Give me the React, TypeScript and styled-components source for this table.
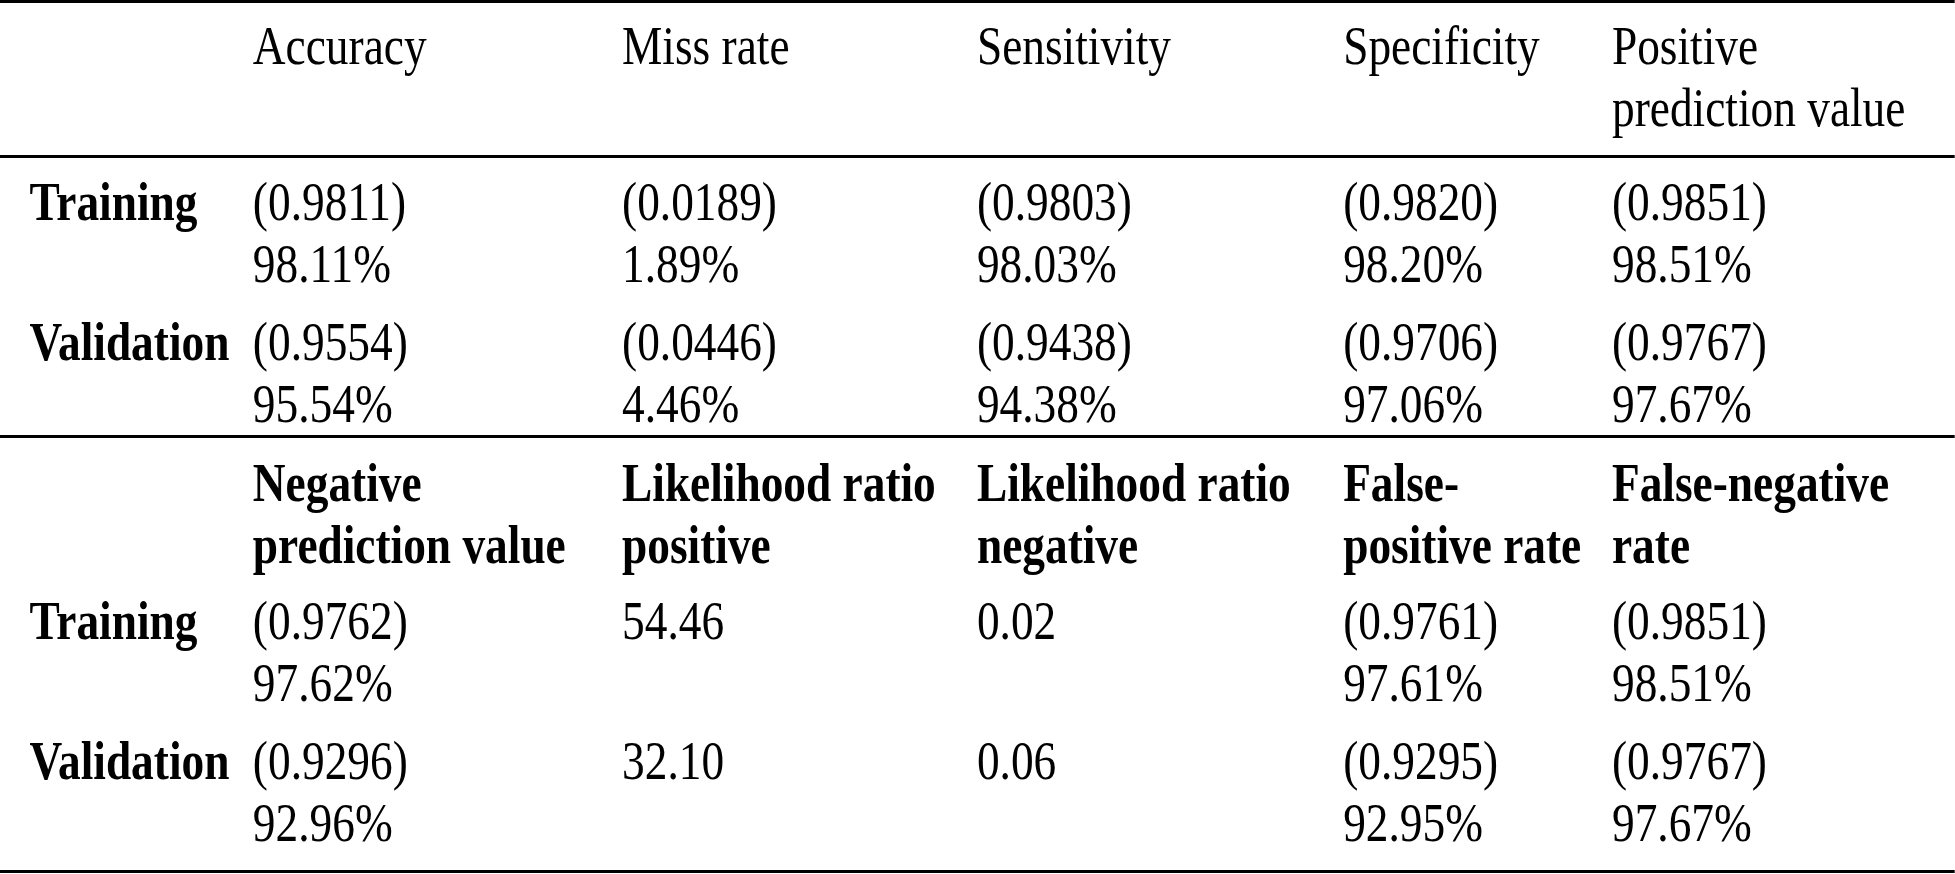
import React from 'react';
import styled, { createGlobalStyle } from 'styled-components';

const SCALE = 0.84;

const Global = createGlobalStyle`
  html, body {
    margin: 0;
    padding: 0;
    background: #ffffff;
    overflow: hidden;
  }
`;

const Page = styled.div`
  width: 1955px;
  height: 874px;
  overflow: hidden;
  background: #ffffff;
`;

const Table = styled.div`
  width: ${1955 / SCALE}px;
  transform: scaleX(${SCALE});
  transform-origin: left top;
  display: flex;
  flex-direction: column;
  font-family: "Liberation Serif", "Times New Roman", Times, serif;
  font-size: 54px;
  line-height: 62px;
  color: #000000;
`;

const Row = styled.div<{ $pt: number; $pb: number; $top?: boolean; $bottom?: boolean; $bold?: boolean }>`
  display: grid;
  grid-template-columns: 301px 439.5px 422.5px 436px 320px 1fr;
  padding: ${(p) => p.$pt}px 0 ${(p) => p.$pb}px;
  border-top: ${(p) => (p.$top ? '3px solid #000' : 'none')};
  border-bottom: ${(p) => (p.$bottom ? '3px solid #000' : 'none')};
  font-weight: ${(p) => (p.$bold ? 700 : 400)};
`;

const Label = styled.div`
  padding-left: 35px;
  font-weight: 700;
  white-space: nowrap;
`;

const Cell = styled.div`
  display: flex;
  flex-direction: column;
  white-space: nowrap;
`;

const Line = styled.span`
  display: block;
`;

type RowData = {
  label: string;
  cells: string[][];
  pt: number;
  pb: number;
  top?: boolean;
  bottom?: boolean;
  bold?: boolean;
};

const rows: RowData[] = [
  {
    label: '',
    cells: [['Accuracy'], ['Miss rate'], ['Sensitivity'], ['Specificity'], ['Positive', 'prediction value']],
    pt: 12,
    pb: 16,
    top: true,
    bottom: true,
  },
  {
    label: 'Training',
    cells: [
      ['(0.9811)', '98.11%'],
      ['(0.0189)', '1.89%'],
      ['(0.9803)', '98.03%'],
      ['(0.9820)', '98.20%'],
      ['(0.9851)', '98.51%'],
    ],
    pt: 13,
    pb: 9,
  },
  {
    label: 'Validation',
    cells: [
      ['(0.9554)', '95.54%'],
      ['(0.0446)', '4.46%'],
      ['(0.9438)', '94.38%'],
      ['(0.9706)', '97.06%'],
      ['(0.9767)', '97.67%'],
    ],
    pt: 7,
    pb: 0,
    bottom: true,
  },
  {
    label: '',
    cells: [
      ['Negative', 'prediction value'],
      ['Likelihood ratio', 'positive'],
      ['Likelihood ratio', 'negative'],
      ['False-', 'positive rate'],
      ['False-negative', 'rate'],
    ],
    pt: 14,
    pb: 6,
    bold: true,
  },
  {
    label: 'Training',
    cells: [['(0.9762)', '97.62%'], ['54.46'], ['0.02'], ['(0.9761)', '97.61%'], ['(0.9851)', '98.51%']],
    pt: 8,
    pb: 9,
  },
  {
    label: 'Validation',
    cells: [['(0.9296)', '92.96%'], ['32.10'], ['0.06'], ['(0.9295)', '92.95%'], ['(0.9767)', '97.67%']],
    pt: 7,
    pb: 16,
    bottom: true,
  },
];

export default function App() {
  return (
    <Page>
      <Global />
      <Table>
        {rows.map((r, i) => (
          <Row key={i} $pt={r.pt} $pb={r.pb} $top={r.top} $bottom={r.bottom} $bold={r.bold}>
            <Label>{r.label}</Label>
            {r.cells.map((c, j) => (
              <Cell key={j}>
                {c.map((l, k) => (
                  <Line key={k}>{l}</Line>
                ))}
              </Cell>
            ))}
          </Row>
        ))}
      </Table>
    </Page>
  );
}
